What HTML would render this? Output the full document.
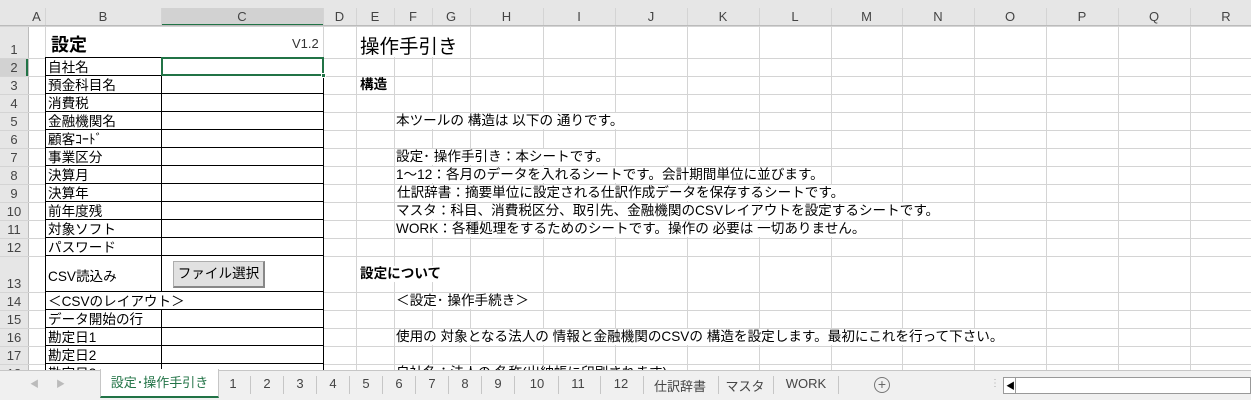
<!DOCTYPE html>
<html><head><meta charset="utf-8"><style>
*{margin:0;padding:0;box-sizing:border-box}
body{width:1251px;height:400px;overflow:hidden;background:#fff;font-family:"Liberation Sans","Noto Sans CJK JP",sans-serif;font-size:13.6px;color:#000;position:relative}
.a{position:absolute;white-space:nowrap}
.l{position:absolute;background:#d4d4d4}
.t{position:absolute;white-space:nowrap;background:#fff;line-height:16px}
.hd{position:absolute;color:#444;font-size:13px;text-align:center}
</style></head><body>
<div class="a" style="left:0;top:0;width:1251px;height:26px;background:#e6e6e6"></div>
<div class="a" style="left:0;top:0;width:28px;height:400px;background:#e6e6e6"></div>
<div class="a" style="left:161px;top:8px;width:162px;height:17px;background:#d2d2d2"></div>
<div class="a" style="left:161px;top:24px;width:162px;height:2px;background:#217346"></div>
<div class="a" style="left:0;top:58px;width:28px;height:18px;background:#d2d2d2"></div>
<div class="a" style="left:26px;top:58px;width:2px;height:18px;background:#217346"></div>
<div id="g"></div>
<script>
var cols=[28,45,161,323,356,394,432,470,543,615,687,759,831,902,974,1046,1118,1190,1262];
var names="ABCDEFGHIJKLMNOPQR";
var rows=[26,58,76,94,112,130,148,166,184,202,220,238,256,292,310,328,346,364,382];
var h="";
for(var i=0;i<cols.length;i++){h+='<div class="l" style="left:'+cols[i]+'px;top:'+(i==0?26:8)+'px;width:1px;height:'+(i==0?350:362)+'px;background:'+(i==0?'#bbb':'#d4d4d4')+'"></div>';
if(i<names.length)h+='<div class="hd" style="left:'+cols[i]+'px;top:9px;width:'+(cols[i+1]-cols[i])+'px">'+names[i]+'</div>';}
for(var j=0;j<rows.length;j++){h+='<div class="l" style="left:0;top:'+rows[j]+'px;width:1251px;height:1px"></div>';
if(j<18)h+='<div class="hd" style="left:0;top:'+(rows[j+1]-16)+'px;width:28px">'+(j+1)+'</div>';}
h+='<div class="l" style="left:0;top:25px;width:1251px;height:1px;background:#bbb"></div>';
document.getElementById('g').innerHTML=h;
</script>
<div class="a" style="left:357px;top:27px;width:113px;height:30px;background:#fff"></div>
<div class="a" style="left:46px;top:27px;width:277px;height:30px;background:#fff"></div>
<div class="a" style="left:51px;top:31px;font-size:18px;font-weight:bold">設定</div>
<div class="a" style="left:292px;top:36px;font-size:13px;color:#333">V1.2</div>
<div class="a" style="left:360px;top:30px;font-size:19.5px">操作手引き</div>
<div class="a" style="left:45px;top:57px;width:279px;height:320px;border-left:1px solid #000;border-right:1px solid #000;background:#fff"></div>
<div class="a" style="left:161px;top:57px;width:1px;height:235px;background:#000"></div>
<div class="a" style="left:161px;top:310px;width:1px;height:70px;background:#000"></div>
<div id="tb"></div>
<script>
var r=[57,75,93,111,129,147,165,183,201,219,237,255,291,309,327,345,363];var s="";
r.forEach(function(y){s+='<div class="a" style="left:45px;top:'+y+'px;width:279px;height:1px;background:#000"></div>';});
document.getElementById('tb').innerHTML=s;
</script>
<div class="a" style="left:48px;top:59px;line-height:18px">自社名<br>預金科目名<br>消費税<br>金融機関名<br>顧客ｺｰﾄﾞ<br>事業区分<br>決算月<br>決算年<br>前年度残<br>対象ソフト<br>パスワード</div>
<div class="a" style="left:48px;top:265px">CSV読込み</div>
<div class="a" style="left:48px;top:293px;line-height:18px">＜CSVのレイアウト＞<br>データ開始の行<br>勘定日1<br>勘定日2<br>勘定日3</div>
<div class="a" style="left:173px;top:261px;width:92px;height:27px;background:#e1e1e1;border:1px solid #adadad;border-right:2px solid #888;border-bottom:2px solid #888;text-align:center;line-height:23px">ファイル選択</div>
<div class="a" style="left:161px;top:57px;width:163px;height:19px;border:2px solid #217346"></div>
<div class="a" style="left:321px;top:73px;width:5px;height:5px;background:#217346;border:1px solid #fff"></div>
<div class="t" style="left:360px;top:77px;font-weight:bold">構造</div>
<div class="t" style="left:396px;top:113px">本ツールの 構造は 以下の 通りです。</div>
<div class="t" style="left:396px;top:149px">設定･ 操作手引き：本シートです。</div>
<div class="t" style="left:396px;top:167px">1～12：各月のデータを入れるシートです。会計期間単位に並びます。</div>
<div class="t" style="left:397px;top:185px">仕訳辞書：摘要単位に設定される仕訳作成データを保存するシートです。</div>
<div class="t" style="left:396px;top:203px">マスタ：科目、消費税区分、取引先、金融機関のCSVレイアウトを設定するシートです。</div>
<div class="t" style="left:396px;top:221px">WORK：各種処理をするためのシートです。操作の 必要は 一切ありません。</div>
<div class="t" style="left:360px;top:266px;font-weight:bold">設定について</div>
<div class="t" style="left:396px;top:293px">＜設定･ 操作手続き＞</div>
<div class="t" style="left:396px;top:329px">使用の 対象となる法人の 情報と金融機関のCSVの 構造を設定します。最初にこれを行って下さい。</div>
<div class="t" style="left:396px;top:365px">自社名：法人の 名称(出納帳に印刷されます)</div>
<div class="a" style="left:0;top:370px;width:1251px;height:30px;background:#f0f0f0;border-top:1px solid #c6c6c6"></div>
<div class="a" style="left:30px;top:377px;color:#bbb;font-size:9px">◀</div>
<div class="a" style="left:56px;top:377px;color:#bbb;font-size:9px">▶</div>
<div class="a" style="left:100px;top:369px;width:119px;height:29px;background:#fff;border-left:1px solid #c6c6c6;border-right:1px solid #c6c6c6;border-bottom:2px solid #217346;text-align:center;line-height:28px;color:#217346;font-size:13px">設定･操作手引き</div>
<div id="tabs"></div>
<script>
var t=[["1",233],["2",267],["3",300],["4",333],["5",366],["6",399],["7",432],["8",465],["9",498],["10",537],["11",578],["12",621],["仕訳辞書",680],["マスタ",745],["WORK",806]];
var sp=[250,283,316,349,382,415,448,481,514,558,600,643,718,773,838];var q="";
t.forEach(function(e){q+='<div class="a" style="top:376px;font-size:13px;left:'+e[1]+'px;transform:translateX(-50%);color:#444">'+e[0]+'</div>';});
sp.forEach(function(x){q+='<div class="a" style="top:376px;left:'+x+'px;width:1px;height:18px;background:#c6c6c6"></div>';});
document.getElementById('tabs').innerHTML=q;
</script>
<div class="a" style="left:874px;top:377px;width:16px;height:16px;border:1px solid #777;border-radius:50%;text-align:center;line-height:13px;color:#666;font-size:14px">+</div>
<div class="a" style="left:990px;top:378px;color:#aaa;font-size:10px">⋮</div>
<div class="a" style="left:1003px;top:377px;width:248px;height:17px;background:#fff;border:1px solid #999"></div>
<div class="a" style="left:1006px;top:379px;font-size:9px;color:#000">◀</div>
<div class="a" style="left:1015px;top:378px;width:1px;height:15px;background:#999"></div>
</body></html>
